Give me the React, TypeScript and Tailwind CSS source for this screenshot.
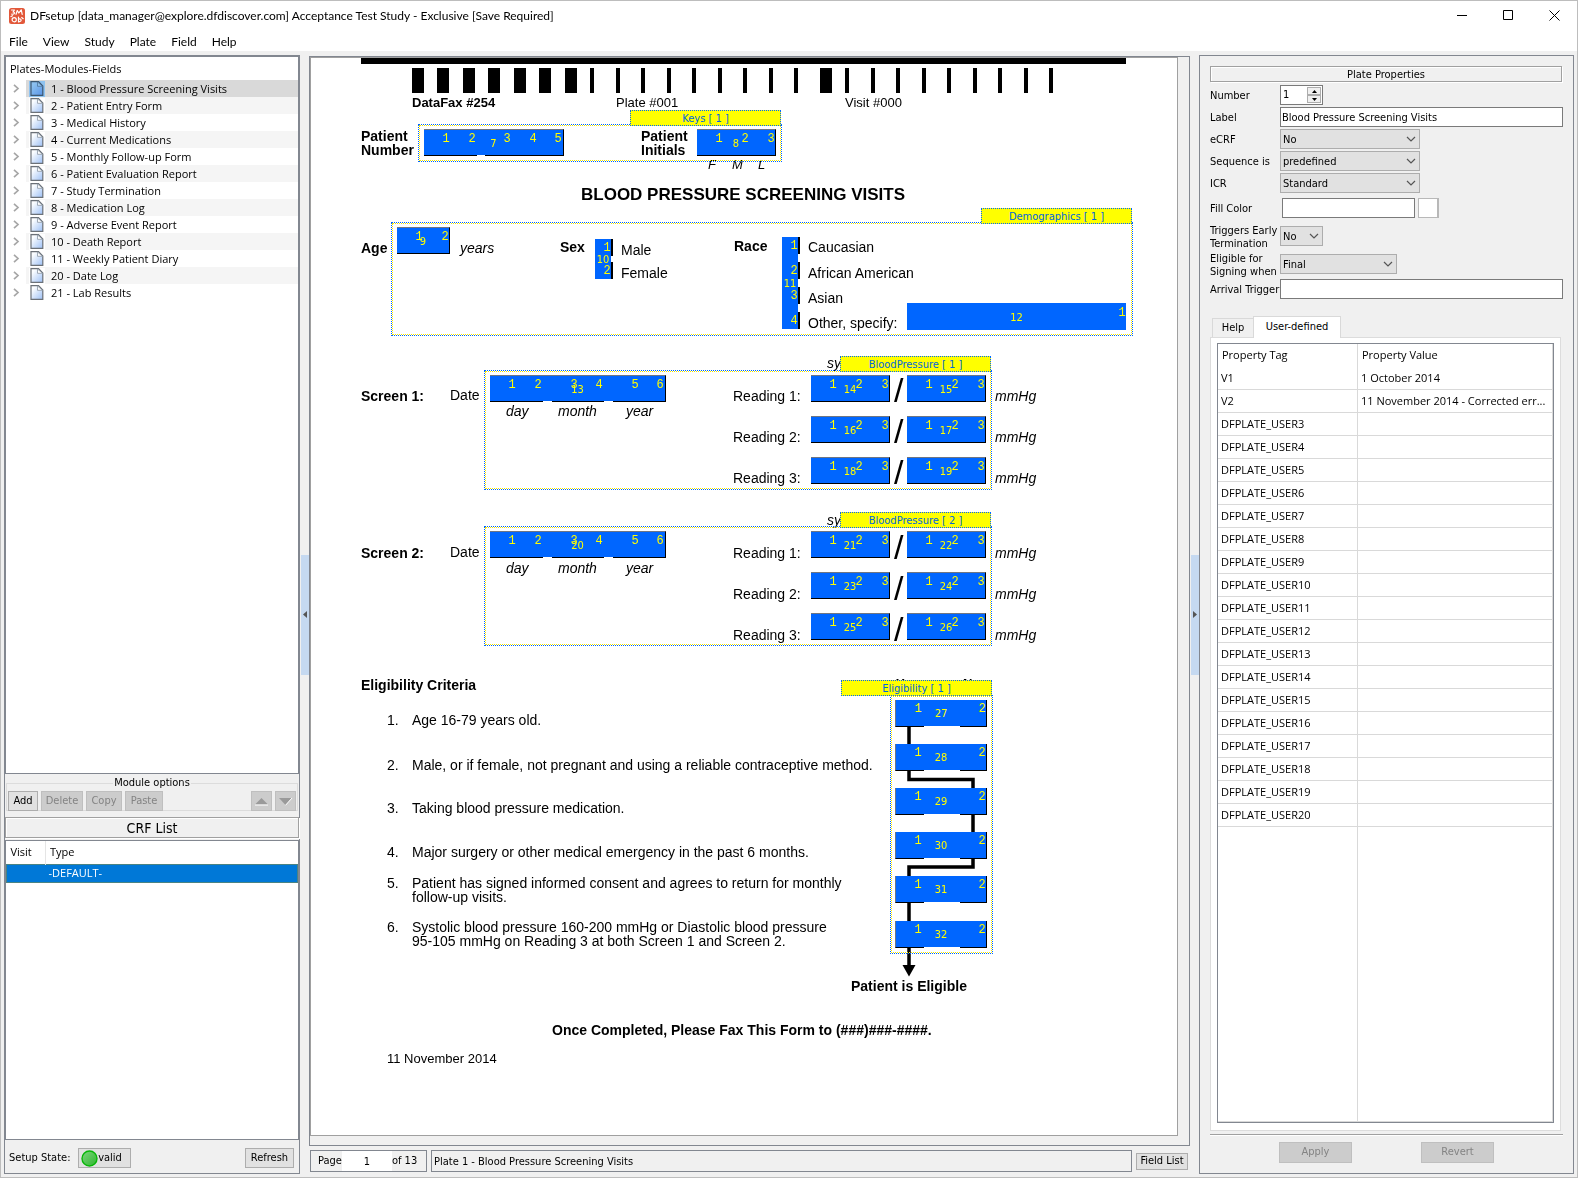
import type { ReactNode } from "react";

const PLATES = [
  "1 - Blood Pressure Screening Visits",
  "2 - Patient Entry Form",
  "3 - Medical History",
  "4 - Current Medications",
  "5 - Monthly Follow-up Form",
  "6 - Patient Evaluation Report",
  "7 - Study Termination",
  "8 - Medication Log",
  "9 - Adverse Event Report",
  "10 - Death Report",
  "11 - Weekly Patient Diary",
  "20 - Date Log",
  "21 - Lab Results",
];

const PROPERTIES: [string, string][] = [
  ["V1", "1 October 2014"],
  ["V2", "11 November 2014 - Corrected err..."],
  ...Array.from({ length: 18 }, (_, i): [string, string] => [`DFPLATE_USER${i + 3}`, ""]),
];

/* ---------- Title bar and menu ---------- */

function AppIcon() {
  return (
    <svg width="16" height="16" viewBox="0 0 16 16" aria-hidden="true">
      <rect width="16" height="16" rx="2.5" fill="#e2583a" />
      <g fill="none" stroke="#fff" strokeWidth="1.2" strokeLinecap="round" strokeLinejoin="round">
        <path d="M2.500 2h3L4 4c2.300 0 2 2.500-1.200 2.200" />
        <path d="M7 6.300 8.300 2.500 9.800 5l2.400-3.200 1 4.500" />
        <circle cx="5.200" cy="11.700" r="2.100" />
        <path d="M9.500 9v5M9.500 11.200c2.800-1.500 4 2.600.3 2.600M12.700 9.500l1.500 1.200M2 8.500l1.500-.8" />
      </g>
    </svg>
  );
}

function TitleBar() {
  return (
    <header className="flex h-[29px] items-center bg-white pl-2 font-['Lato',sans-serif] text-[12px] text-black">
      <AppIcon />
      <h1 className="ml-[5px] flex-1 font-normal">
        DFsetup [data_manager@explore.dfdiscover.com] Acceptance Test Study - Exclusive [Save Required]
      </h1>
      <button type="button" aria-label="Minimize" className="flex h-full w-[46px] items-center justify-center">
        <svg width="11" height="11" viewBox="0 0 11 11"><path d="M0 5.500h10" stroke="#000" /></svg>
      </button>
      <button type="button" aria-label="Maximize" className="flex h-full w-[46px] items-center justify-center">
        <svg width="11" height="11" viewBox="0 0 11 11"><path d="M.5.5h9v9h-9z" fill="none" stroke="#000" /></svg>
      </button>
      <button type="button" aria-label="Close" className="flex h-full w-[46px] items-center justify-center">
        <svg width="11" height="11" viewBox="0 0 11 11"><path d="m.5.5 10 10m0-10-10 10" stroke="#000" /></svg>
      </button>
    </header>
  );
}

function MenuBar() {
  return (
    <nav className="flex h-[21px] gap-[15px] bg-white pl-2 font-['Lato',sans-serif] text-[12px] leading-[24px] text-black">
      {["File", "View", "Study", "Plate", "Field", "Help"].map((m) => (
        <button key={m} type="button">{m}</button>
      ))}
    </nav>
  );
}

/* ---------- Left panel ---------- */

function PlateIcon() {
  return (
    <svg width="14" height="15" viewBox="0 0 14 15" aria-hidden="true">
      <defs>
        <linearGradient id="sheet" x1="0" y1="0" x2="1" y2="1">
          <stop offset="0.2" stopColor="#fbfdff" />
          <stop offset="1" stopColor="#9dc0f5" />
        </linearGradient>
      </defs>
      <path d="M1 .7h7.500L12.800 5v9.300H1z" fill="url(#sheet)" stroke="#6b7178" strokeWidth="1.200" />
      <path d="M7.500 1v4.300h5z" fill="#fff" stroke="#8d98a5" strokeWidth=".8" />
    </svg>
  );
}

function PlateTree() {
  return (
    <section className="flex h-[718px] flex-col border border-[#828790] bg-white font-['Open_Sans',sans-serif] text-[11px]">
      <h2 className="h-[23px] pl-1 font-normal leading-[23px]">Plates-Modules-Fields</h2>
      <ul>
        {PLATES.map((p, i) => (
          <li key={p} className="flex h-[17px] items-center">
            <svg className="ml-[7px] mr-[6px]" width="7" height="9" viewBox="0 0 7 9" aria-hidden="true">
              <path d="m1 .8 4 3.700-4 3.700" fill="none" stroke="#a6a6a6" strokeWidth="1.700" />
            </svg>
            <div
              className={
                i === 0
                  ? "flex h-full flex-1 items-center bg-[#d9d9d9] pl-[3px]"
                  : i % 2 === 1
                    ? "flex h-full flex-1 items-center bg-[#f5f5f5] pl-[3px]"
                    : "flex h-full flex-1 items-center pl-[3px]"
              }
            >
              <span className={i === 0 ? "flex h-4 w-4 items-center justify-center bg-[#8fc3f0]" : "flex h-4 w-4 items-center justify-center bg-white"}>
                <span className={i === 0 ? "mix-blend-multiply" : ""}><PlateIcon /></span>
              </span>
              <span className="ml-[6px] leading-[17px]">{p}</span>
            </div>
          </li>
        ))}
      </ul>
    </section>
  );
}

function PushButton({ children, disabled, className, label }: { children: ReactNode; disabled?: boolean; className: string; label?: string }) {
  return (
    <button
      type="button"
      disabled={disabled}
      aria-label={label}
      className={`flex items-center justify-center border ${disabled ? "border-[#bfbfbf] bg-[#cccccc] text-[#838383]" : "border-[#adadad] bg-[#e1e1e1] text-black"} ${className}`}
    >
      {children}
    </button>
  );
}

function ModuleOptions() {
  return (
    <fieldset className="mx-px mt-[3px] h-[34px] border border-[#dcdcdc] px-px">
      <legend className="mx-auto h-[12px] px-[1px] leading-[12px]">Module options</legend>
      <div className="flex gap-[3px] pt-[2px]">
        <PushButton className="h-5 w-[30px]">Add</PushButton>
        <PushButton className="h-5 w-[42px]" disabled>Delete</PushButton>
        <PushButton className="h-5 w-[36px]" disabled>Copy</PushButton>
        <PushButton className="mr-auto h-5 w-[38px]" disabled>Paste</PushButton>
        <PushButton className="h-5 w-[21px]" disabled label="Move up">
          <svg width="15" height="9" viewBox="0 0 15 9"><path d="M1 7.500 7.500 1 14 7.500z" fill="#9a9a9a" /><path d="M1 8h13" stroke="#fff" /></svg>
        </PushButton>
        <PushButton className="h-5 w-[21px]" disabled label="Move down">
          <svg width="15" height="9" viewBox="0 0 15 9"><path d="M1 1h13L7.500 8z" fill="#9a9a9a" /><path d="M14 1 7.500 8.300" stroke="#fff" /></svg>
        </PushButton>
      </div>
    </fieldset>
  );
}

function LeftPanel() {
  return (
    <aside className="flex w-[296px] flex-col border border-[#828790] font-['DejaVu_Sans_Condensed','DejaVu_Sans',sans-serif] text-[11px] text-black">
      <PlateTree />
      <ModuleOptions />
      <h2 className="mt-[6px] h-[21px] border border-[#a0a0a0] text-center text-[14px] font-normal leading-[20px] shadow-[inset_1px_1px_0_#fff,1px_1px_0_#fff]">
        CRF List
      </h2>
      <div className="mt-[2px] flex-1 border border-[#828790] bg-white font-['Open_Sans',sans-serif]">
        <table className="w-full table-fixed border-collapse">
          <thead>
            <tr className="h-[23px] text-left">
              <th className="w-[39px] border-r border-[#e5e5e5] pl-1 font-normal">Visit</th>
              <th className="pl-1 font-normal">Type</th>
            </tr>
          </thead>
          <tbody>
            <tr className="h-[18px] bg-[#0078d7] leading-4 text-white">
              <td className="border-y border-l border-[#4a8383]" />
              <td className="border-y border-r border-[#4a8383] pl-[3px]">-DEFAULT-</td>
            </tr>
          </tbody>
        </table>
      </div>
      <footer className="flex h-[33px] items-center pl-1 pr-[5px] pt-[3px]">
        <span>Setup State:</span>
        <PushButton className="ml-2 mr-auto h-5 w-[53px] pr-[7px]">
          <svg width="17" height="17" viewBox="0 0 17 17" aria-hidden="true">
            <defs>
              <linearGradient id="led" x1="0" y1="0" x2="1" y2="1">
                <stop offset="0" stopColor="#7ed67e" />
                <stop offset="1" stopColor="#2fb52f" />
              </linearGradient>
            </defs>
            <circle cx="8.500" cy="8.500" r="7.500" fill="url(#led)" stroke="#08b708" strokeWidth="1.400" />
          </svg>
          valid
        </PushButton>
        <PushButton className="h-5 w-[49px]">Refresh</PushButton>
      </footer>
    </aside>
  );
}

function Splitter({ direction }: { direction: "left" | "right" }) {
  return (
    <div className="flex w-[9px] shrink-0 flex-col items-center justify-center">
      <button type="button" aria-label={`Collapse ${direction} panel`} className="flex h-[120px] w-2 items-center justify-center bg-[#c5d9f1]">
        <svg width="4" height="7" viewBox="0 0 4 7">
          <path d={direction === "left" ? "M4 0v7L0 3.500z" : "M0 0v7l4-3.500z"} fill="#555" />
        </svg>
      </button>
    </div>
  );
}

/* ---------- Plate canvas: every item carries its own position on the form ---------- */

type Style = "n" | "b" | "i" | "sb" | "s" | "si" | "title" | "slash";
const TEXT_CLASS: Record<Style, string> = {
  n: "text-[14px] leading-[16px]",
  b: "text-[14px] leading-[16px] font-bold",
  i: "text-[14px] leading-[16px] italic",
  s: "text-[13px] leading-[16px]",
  sb: "text-[13px] leading-[16px] font-bold",
  si: "text-[13px] leading-[16px] italic",
  title: "text-[17px] leading-[20px] font-bold",
  slash: "text-[34px] leading-[34px]",
};

const bpText = (y: number, n: number): [number, number, string, Style][] => [
  [50, y + 30, `Screen ${n}:`, "b"],
  [139, y + 29, "Date", "n"],
  [195, y + 45, "day", "i"],
  [247, y + 45, "month", "i"],
  [315, y + 45, "year", "i"],
  [516, y - 3, "sy", "i"],
  ...[0, 1, 2].flatMap((r): [number, number, string, Style][] => [
    [422, y + 30 + r * 41, `Reading ${r + 1}:`, "n"],
    [583, y + 15 + r * 41, "/", "slash"],
    [684, y + 30 + r * 41, "mmHg", "i"],
  ]),
];

const TEXTS: [number, number, string, Style][] = [
  [101, 37, "DataFax #254", "sb"],
  [305, 37, "Plate #001", "s"],
  [534, 37, "Visit #000", "s"],
  [50, 70, "Patient", "b"],
  [50, 84, "Number", "b"],
  [330, 70, "Patient", "b"],
  [330, 84, "Initials", "b"],
  [397, 99, "F", "si"],
  [421, 99, "M", "si"],
  [447, 99, "L", "si"],
  [270, 127, "BLOOD PRESSURE SCREENING VISITS", "title"],
  [50, 182, "Age", "b"],
  [149, 182, "years", "i"],
  [249, 181, "Sex", "b"],
  [310, 184, "Male", "n"],
  [310, 207, "Female", "n"],
  [423, 180, "Race", "b"],
  [497, 181, "Caucasian", "n"],
  [497, 207, "African American", "n"],
  [497, 232, "Asian", "n"],
  [497, 257, "Other, specify:", "n"],
  ...bpText(300, 1),
  ...bpText(457, 2),
  [50, 619, "Eligibility Criteria", "b"],
  [585, 618, "Yes", "sb"],
  [652, 618, "No", "sb"],
  [540, 920, "Patient is Eligible", "b"],
  [241, 964, "Once Completed, Please Fax This Form to (###)###-####.", "b"],
  [76, 993, "11 November 2014", "s"],
];

const CRITERIA: [number, string][] = [
  [655, "Age 16-79 years old."],
  [700, "Male, or if female, not pregnant and using a reliable contraceptive method."],
  [743, "Taking blood pressure medication."],
  [787, "Major surgery or other medical emergency in the past 6 months."],
  [818, "Patient has signed informed consent and agrees to return for monthly\nfollow-up visits."],
  [862, "Systolic blood pressure 160-200 mmHg or Diastolic blood pressure\n95-105 mmHg on Reading 3 at both Screen 1 and Screen 2."],
];

type Module = { name: string; box: [number, number, number, number]; tag: [number, number] };
const MODULES: Module[] = [
  { name: "Keys [ 1 ]", box: [107, 66, 364, 38], tag: [319, 52] },
  { name: "Demographics [ 1 ]", box: [80, 164, 742, 114], tag: [670, 150] },
  { name: "BloodPressure [ 1 ]", box: [173, 312, 508, 120], tag: [529, 298] },
  { name: "BloodPressure [ 2 ]", box: [173, 468, 508, 120], tag: [529, 454] },
  { name: "Eligibility [ 1 ]", box: [579, 637, 103, 259], tag: [530, 622] },
];

/* digits: centre of each box number, measured from the field's own corner */
type Edge = "box" | "choice" | "line";
type Field = { n: number; x: number; y: number; w: number; digits: number[]; gaps?: [number, number][]; edge?: Edge };
const EDGE_CLASS: Record<Edge, string> = {
  box: "border-b border-r border-t border-b-black border-r-black border-t-[#6f7682]",
  choice: "border-b border-r border-l border-b-black border-r-black border-l-[#6f7682] pt-px",
  line: "border-y border-[#0066ff]",
};

const bpFields = (y: number, first: number): Field[] => [
  { n: first, x: 179, y, w: 176, digits: [22, 48, 84, 109, 145, 170], gaps: [[53, 9], [114, 9]] },
  ...[0, 1, 2].flatMap((r): Field[] => [
    { n: first + 1 + r * 2, x: 500, y: y + r * 41, w: 79, digits: [22, 48, 74] },
    { n: first + 2 + r * 2, x: 596, y: y + r * 41, w: 79, digits: [22, 48, 74] },
  ]),
];
const FIELDS: Field[] = [
  { n: 7, x: 113, y: 71, w: 140, digits: [22, 48, 83, 109, 134], gaps: [[53, 8]] },
  { n: 8, x: 386, y: 71, w: 79, digits: [22, 48, 74] },
  { n: 9, x: 86, y: 169, w: 53, digits: [22, 48] },
  { n: 12, x: 596, y: 245, w: 219, digits: [215], edge: "line" },
  ...bpFields(317, 13),
  ...bpFields(473, 20),
  ...[642, 686, 730, 774, 818, 863].map(
    (y, i): Field => ({ n: 27 + i, x: 584, y, w: 92, digits: [22, 86], gaps: [[28, 36]], edge: "choice" }),
  ),
];

/* Fields whose boxes are stacked one above the other */
const STACKS = [
  { n: 10, x: 284, y: 181, h: 40, boxes: [0, 23], number: 21 },
  { n: 11, x: 471, y: 179, h: 92, boxes: [0, 25, 50, 75], number: 47 },
];

function Barcode() {
  return (
    <svg className="absolute left-[50px] top-0" width="765" height="36" viewBox="0 0 765 36" aria-hidden="true">
      <rect width="765" height="6" />
      {Array.from({ length: 26 }, (_, i) => (
        <rect key={i} x={Math.round(51 + i * 25.48)} y="10" width={i < 7 || i === 16 ? 12 : 4} height="25" />
      ))}
    </svg>
  );
}

function EligibilityPath() {
  return (
    <svg className="absolute left-[584px] top-[660px]" width="100" height="260" viewBox="0 0 100 260" aria-hidden="true">
      <path d="M14 0v61.500h64v87.500H14v100" fill="none" stroke="#000" strokeWidth="3.500" />
      <path d="M7.500 247h13L14 258.500z" />
    </svg>
  );
}

const DIGIT = "absolute -translate-x-1/2 font-['Liberation_Mono',monospace] text-[12px] leading-[12px] text-[#ffff00]";
const NUMBER = "absolute -translate-x-1/2 text-[11px] leading-[12px] text-[#ffff00] font-['DejaVu_Sans_Condensed','DejaVu_Sans',sans-serif]";

function PlateCanvas() {
  return (
    <div className="relative mb-[9px] mr-[11px] min-h-[1079px] flex-1 overflow-hidden border border-[#a0a0a0] bg-white font-['Liberation_Sans',Arial,sans-serif] text-black">
      <Barcode />
      <EligibilityPath />
      {TEXTS.map(([x, y, t, s]) => (
        <span key={`${x}-${y}`} className={`absolute whitespace-nowrap ${TEXT_CLASS[s]}`} style={{ left: x, top: y }}>{t}</span>
      ))}
      <ol>
        {CRITERIA.map(([y, t], i) => (
          <li key={y} className="absolute left-[76px] flex whitespace-pre text-[14px] leading-[14px]" style={{ top: y }}>
            <span className="w-[25px]">{i + 1}.</span>
            <span>{t}</span>
          </li>
        ))}
      </ol>
      {MODULES.map((m) => (
        <div key={m.name}>
          <div className="absolute border border-dotted border-[#0066ff]" style={{ left: m.box[0], top: m.box[1], width: m.box[2], height: m.box[3] }}>
            <div className="h-full border border-dotted border-[#f5e600]" />
          </div>
          <div
            className="absolute h-4 w-[151px] border border-dotted border-[#0066ff] bg-[#ffff00] text-center font-['DejaVu_Sans_Condensed','DejaVu_Sans',sans-serif] text-[11px] leading-[16px] text-[#0066dd]"
            style={{ left: m.tag[0], top: m.tag[1] }}
          >
            {m.name}
          </div>
        </div>
      ))}
      {FIELDS.map((f) => (
        <div
          key={f.n}
          className={`absolute h-[27px] bg-[#0066ff] ${EDGE_CLASS[f.edge ?? "box"]}`}
          style={{ left: f.x, top: f.y, width: f.w }}
        >
          {f.gaps?.map(([gx, gw]) => (
            <span key={gx} className="absolute -bottom-px h-px bg-white" style={{ left: gx, width: gw }} />
          ))}
          {f.digits.map((d, i) => (
            <span key={d} className={`${DIGIT} top-[3px]`} style={{ left: d }}>{i + 1}</span>
          ))}
          <span className={`${NUMBER} left-1/2 top-[8px]`}>{f.n}</span>
        </div>
      ))}
      {STACKS.map((s) => (
        <div key={s.n} className="absolute w-4 bg-[#0066ff]" style={{ left: s.x, top: s.y, height: s.h }}>
          {s.boxes.map((b, i) => (
            <span key={b} className="absolute left-0 h-[17px] w-[18px] border-r-2 border-black" style={{ top: b }}>
              <span className={`${DIGIT} left-3 top-[3px]`}>{i + 1}</span>
            </span>
          ))}
          <span className={`${NUMBER} left-2 -translate-y-1/2`} style={{ top: s.number }}>{s.n}</span>
        </div>
      ))}
    </div>
  );
}

function CenterPanel() {
  return (
    <main className="mt-px flex min-w-0 flex-1 flex-col font-['DejaVu_Sans_Condensed','DejaVu_Sans',sans-serif] text-[11px] text-black">
      <div className="flex flex-1 flex-col border border-[#828790]">
        <PlateCanvas />
      </div>
      <footer className="mb-[2px] mt-1 flex h-[22px] items-center gap-1 pl-px pr-[2px]">
        <div className="flex h-full w-[117px] items-center border border-[#828790] pl-[7px]">
          <label htmlFor="page">Page</label>
          <input id="page" defaultValue="1" className="h-5 w-[50px] bg-white text-center" />
          <span>of 13</span>
        </div>
        <div className="h-full flex-1 border border-[#828790] pl-[2px] leading-[22px]">Plate 1 - Blood Pressure Screening Visits</div>
        <PushButton className="h-[17px] w-[52px]">Field List</PushButton>
      </footer>
    </main>
  );
}

/* ---------- Right panel ---------- */

function Row({ id, label, children, tall }: { id: string; label: ReactNode; children: ReactNode; tall?: boolean }) {
  return (
    <div className={tall ? "flex h-[26px] items-center" : "flex h-5 items-center"}>
      <label htmlFor={id} className="w-[70px] shrink-0 whitespace-nowrap pt-px leading-[13px]">{label}</label>
      {children}
    </div>
  );
}

function Select({ id, value, className }: { id: string; value: string; className: string }) {
  return (
    <div className={`relative ${className}`}>
      <select id={id} defaultValue={value} className="h-5 w-full appearance-none border border-[#adadad] bg-[#e1e1e1] pl-[2px] pt-px leading-[17px]">
        <option>{value}</option>
      </select>
      <svg className="pointer-events-none absolute right-1 top-[7px]" width="10" height="6" viewBox="0 0 10 6" aria-hidden="true">
        <path d="m1 1 4 4 4-4" fill="none" stroke="#555" strokeWidth="1.200" />
      </svg>
    </div>
  );
}

function PropertyForm() {
  return (
    <form className="mt-[3px] flex flex-col gap-[2px]">
      <Row id="number" label="Number">
        <div className="flex h-5 w-[43px] border border-[#7a7a7a] bg-white">
          <input id="number" defaultValue="1" className="w-[26px] pl-[2px] pt-px" />
          <div className="my-px flex w-[14px] flex-col">
            <button type="button" aria-label="Increase" className="flex h-2 items-center justify-center border border-[#adadad] bg-[#f0f0f0]">
              <svg width="5" height="3" viewBox="0 0 5 3"><path d="M0 3 2.500 0 5 3z" /></svg>
            </button>
            <button type="button" aria-label="Decrease" className="flex h-2 items-center justify-center border border-[#adadad] bg-[#f0f0f0]">
              <svg width="5" height="3" viewBox="0 0 5 3"><path d="M0 0h5L2.500 3z" /></svg>
            </button>
          </div>
        </div>
      </Row>
      <Row id="label" label="Label">
        <input id="label" defaultValue="Blood Pressure Screening Visits" className="h-5 min-w-0 flex-1 border border-[#7a7a7a] bg-white pl-px pt-px" />
      </Row>
      <Row id="ecrf" label="eCRF"><Select id="ecrf" value="No" className="w-[140px]" /></Row>
      <Row id="sequence" label="Sequence is"><Select id="sequence" value="predefined" className="w-[140px]" /></Row>
      <Row id="icr" label="ICR"><Select id="icr" value="Standard" className="w-[140px]" /></Row>
      <Row id="fill" label="Fill Color" tall>
        <input id="fill" className="ml-[2px] h-5 w-[133px] border border-[#7a7a7a] bg-white" />
        <button type="button" aria-label="Choose fill color" className="ml-[3px] h-5 w-[21px] border border-r-2 border-[#b8b8b8] bg-white" />
      </Row>
      <Row id="triggers" label={<>Triggers Early<br />Termination</>} tall><Select id="triggers" value="No" className="w-[43px]" /></Row>
      <Row id="signing" label={<>Eligible for<br />Signing when</>} tall><Select id="signing" value="Final" className="w-[117px]" /></Row>
      <Row id="arrival" label="Arrival Trigger">
        <input id="arrival" className="h-5 min-w-0 flex-1 border border-[#7a7a7a] bg-white" />
      </Row>
    </form>
  );
}

function PropertyTabs() {
  return (
    <section className="mt-[17px] flex flex-1 flex-col pr-[2px]">
      <div role="tablist" className="flex items-end pl-[2px]">
        <button type="button" role="tab" aria-selected="false" className="h-[19px] w-[41px] border border-b-0 border-r-0 border-[#d9d9d9]">Help</button>
        <button type="button" role="tab" aria-selected="true" className="relative -mb-px h-[22px] w-[88px] border border-b-0 border-[#d9d9d9] bg-white">User-defined</button>
      </div>
      <div role="tabpanel" className="flex flex-1 flex-col border border-[#dcdcdc] bg-white px-[6px] pb-[7px] pt-[5px]">
        <div className="flex flex-1 flex-col border border-[#828790] font-['Open_Sans',sans-serif]">
          <table className="w-full table-fixed border-separate border-spacing-0">
            <thead>
              <tr className="h-[23px] text-left">
                <th className="w-[140px] border-r border-[#d9d9d9] pl-1 font-normal">Property Tag</th>
                <th className="border-r border-[#d9d9d9] pl-1 font-normal">Property Value</th>
              </tr>
            </thead>
            <tbody>
              {PROPERTIES.map(([tag, value]) => (
                <tr key={tag} className="h-[23px]">
                  <td className="border-b border-r border-[#d9d9d9] pl-[3px]">{tag}</td>
                  <td className="whitespace-nowrap border-b border-r border-[#d9d9d9] pl-[3px]">{value}</td>
                </tr>
              ))}
            </tbody>
          </table>
          <div className="flex flex-1 border-b border-r border-[#d9d9d9]">
            <div className="w-[140px] border-r border-[#d9d9d9]" />
          </div>
        </div>
      </div>
    </section>
  );
}

function RightPanel() {
  return (
    <aside className="flex w-[375px] flex-col border border-[#828790] pl-[10px] pr-[10px] pt-[10px] font-['DejaVu_Sans_Condensed','DejaVu_Sans',sans-serif] text-[11px] text-black">
      <h2 className="mr-px h-4 border border-[#a0a0a0] text-center font-normal leading-[16px] shadow-[inset_1px_1px_0_#fff,1px_1px_0_#fff]">Plate Properties</h2>
      <PropertyForm />
      <PropertyTabs />
      <div className="mt-[3px] h-[2px] border-b border-t border-b-white border-t-[#a0a0a0]" />
      <footer className="flex h-[37px] justify-evenly pt-[6px]">
        <PushButton className="h-[21px] w-[73px]" disabled>Apply</PushButton>
        <PushButton className="h-[21px] w-[73px]" disabled>Revert</PushButton>
      </footer>
    </aside>
  );
}

export default function App() {
  return (
    <div className="flex min-h-screen flex-col border border-[#bdbdbd] bg-[#f0f0f0]">
      <TitleBar />
      <MenuBar />
      <div className="flex flex-1 pb-[3px] pl-[3px] pr-[3px] pt-1">
        <LeftPanel />
        <Splitter direction="left" />
        <CenterPanel />
        <Splitter direction="right" />
        <RightPanel />
      </div>
    </div>
  );
}
